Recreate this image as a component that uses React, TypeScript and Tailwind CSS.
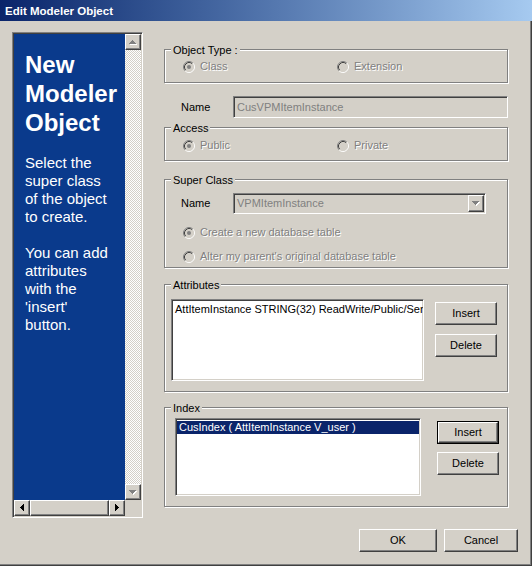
import React from 'react'

const raised = 'bg-[#d4d0c8] border border-t-white border-l-white border-r-[#404040] border-b-[#404040] shadow-[inset_-1px_-1px_0_#808080]'
const sunken = 'border border-t-[#808080] border-l-[#808080] border-r-white border-b-white shadow-[inset_1px_1px_0_#404040,inset_-1px_-1px_0_#d4d0c8]'
const dimText = 'text-[#808080] [text-shadow:1px_1px_0_#fff]'

const UP = 'M3 0h1v1h1v1h1v1h1v1H0V3h1V2h1V1h1z'
const DOWN = 'M0 0h7v1H6v1H5v1H4v1H3V3H2V2H1V1H0z'
const RIGHT = 'M0 0h1v1h1v1h1v1h1v1H3v1H2v1H1v1H0z'
const LEFT = 'M4 0v7H3V6H2V5H1V4H0V3h1V2h1V1h1V0z'

const Arrow = ({ d, w, h, dim }: { d: string; w: number; h: number; dim?: boolean }) => (
  <svg width={w + 1} height={h + 1} viewBox={`0 0 ${w + 1} ${h + 1}`}>
    {dim && <path d={d} fill="#fff" transform="translate(1 1)" />}
    <path d={d} fill={dim ? '#808080' : '#000'} />
  </svg>
)

const Radio = ({ checked }: { checked?: boolean }) => (
  <svg width="12" height="12" viewBox="0 0 12 12" className="shrink-0">
    <circle cx="6" cy="6" r="4" fill="#d4d0c8" />
    <path d="M2.11 9.89A5.5 5.5 0 0 1 9.89 2.11" stroke="#808080" fill="none" />
    <path d="M9.89 2.11A5.5 5.5 0 0 1 2.11 9.89" stroke="#fff" fill="none" />
    <path d="M2.82 9.18A4.5 4.5 0 0 1 9.18 2.82" stroke="#404040" fill="none" />
    <path d="M9.18 2.82A4.5 4.5 0 0 1 2.82 9.18" stroke="#d4d0c8" fill="none" />
    {checked && <circle cx="6" cy="6" r="2" fill="#808080" />}
  </svg>
)

const Option = ({ label, checked }: { label: string; checked?: boolean }) => (
  <div className="flex items-center gap-[5px] h-[13px]">
    <Radio checked={checked} />
    <span className={`${dimText} whitespace-nowrap`}>{label}</span>
  </div>
)

const Group = ({ label, className, children }: { label: string; className: string; children: React.ReactNode }) => (
  <div className={`w-[344px] flex flex-col border border-[#808080] shadow-[inset_1px_1px_0_#fff,1px_1px_0_#fff] ${className}`}>
    <span className="-mt-[6px] ml-[6px] self-start bg-[#d4d0c8] px-[2px] leading-[13px]">{label}</span>
    {children}
  </div>
)

const Btn = ({ label, className }: { label: string; className: string }) => (
  <div className={`${raised} flex items-center justify-center ${className}`}>{label}</div>
)

const ScrollBtn = ({ children }: { children: React.ReactNode }) => (
  <div className={`${raised} w-[16px] h-[16px] shrink-0 flex items-center justify-center`}>{children}</div>
)

const LeftPanel = () => (
  <div className={`ml-[12px] mt-[11px] w-[131px] h-[486px] p-[1px] flex flex-col ${sunken}`}>
    <div className="flex flex-1 min-h-0">
      <div className="flex-1 bg-[#0a3a8c] pl-[11px] pt-[16px] text-white">
        <div className="font-bold text-[24px] leading-[29px]">New<br />Modeler<br />Object</div>
        <div className="mt-[17px] text-[15px] leading-[18px]">
          Select the<br />super class<br />of the object<br />to create.<br /><br />
          You can add<br />attributes<br />with the<br />'insert'<br />button.
        </div>
      </div>
      <div className="w-[16px] flex flex-col">
        <ScrollBtn><Arrow d={UP} w={7} h={4} dim /></ScrollBtn>
        <div className="flex-1 bg-[repeating-conic-gradient(#d4d0c8_0%_25%,#ffffff_0%_50%)] bg-[length:2px_2px]" />
        <ScrollBtn><Arrow d={DOWN} w={7} h={4} dim /></ScrollBtn>
      </div>
    </div>
    <div className="flex h-[16px]">
      <ScrollBtn><Arrow d={LEFT} w={4} h={7} /></ScrollBtn>
      <div className={`${raised} flex-1`} />
      <ScrollBtn><Arrow d={RIGHT} w={4} h={7} /></ScrollBtn>
      <div className="w-[16px] bg-[#d4d0c8]" />
    </div>
  </div>
)

export default function App() {
  return (
    <div className="w-[532px] h-[566px] bg-[#d4d0c8] flex flex-col font-['Liberation_Sans',Arial,sans-serif] text-[11px] leading-[13px] text-black shadow-[inset_-1px_-1px_0_#404040,inset_-2px_-2px_0_#808080] overflow-hidden">
      <div className="h-[21px] shrink-0 flex items-center pl-[5px] pt-[1px] bg-linear-to-r from-[#0a246a] to-[#a6caf0]">
        <span className="text-white font-bold text-[11.5px]">Edit Modeler Object</span>
      </div>
      <div className="flex items-start">
        <LeftPanel />
        <div className="ml-[21px] w-[354px] flex flex-col">
          <Group label="Object Type :" className="mt-[28px] h-[34px]">
            <div className="mt-[3px] flex pl-[18px]">
              <div className="w-[154px]"><Option label="Class" checked /></div>
              <Option label="Extension" />
            </div>
          </Group>

          <div className="mt-[13px] flex items-center pl-[17px] w-[344px]">
            <span className="w-[52px]">Name</span>
            <div className={`w-[275px] h-[22px] bg-[#d4d0c8] flex items-center pl-[3px] ${sunken}`}>
              <span className="text-[#808080]">CusVPMItemInstance</span>
            </div>
          </div>

          <Group label="Access" className="mt-[9px] h-[34px]">
            <div className="mt-[4px] flex pl-[18px]">
              <div className="w-[154px]"><Option label="Public" checked /></div>
              <Option label="Private" />
            </div>
          </Group>

          <Group label="Super Class" className="mt-[18px] h-[89px]">
            <div className="mt-[6px] flex items-center pl-[16px]">
              <span className="w-[52px]">Name</span>
              <div className={`w-[253px] h-[21px] p-[1px] bg-[#d4d0c8] flex ${sunken}`}>
                <span className="flex-1 flex items-center pl-[2px] text-[#808080]">VPMItemInstance</span>
                <div className={`${raised} w-[16px] flex items-center justify-center`}>
                  <Arrow d={DOWN} w={7} h={4} dim />
                </div>
              </div>
            </div>
            <div className="mt-[12px] pl-[18px]"><Option label="Create a new database table" checked /></div>
            <div className="mt-[11px] pl-[18px]"><Option label="Alter my parent's original database table" /></div>
          </Group>

          <Group label="Attributes" className="mt-[16px] h-[108px]">
            <div className="mt-[7px] flex items-start pl-[6px]">
              <div className={`w-[253px] h-[82px] bg-white overflow-hidden pl-[3px] pt-[3px] ${sunken}`}>
                <div className="whitespace-nowrap">AttItemInstance STRING(32) ReadWrite/Public/Sen</div>
              </div>
              <div className="ml-[11px] mt-[3px] flex flex-col gap-[9px]">
                <Btn label="Insert" className="w-[62px] h-[23px]" />
                <Btn label="Delete" className="w-[62px] h-[23px]" />
              </div>
            </div>
          </Group>

          <Group label="Index" className="mt-[15px] h-[100px]">
            <div className="mt-[3px] flex items-start pl-[10px]">
              <div className={`w-[246px] h-[78px] bg-white overflow-hidden p-[1px] pt-[2px] ${sunken}`}>
                <div className="h-[13px] bg-[#0a246a] text-white pl-[2px] whitespace-nowrap">CusIndex ( AttItemInstance V_user )</div>
              </div>
              <div className="ml-[16px] mt-[3px] flex flex-col gap-[8px]">
                <div className="w-[62px] h-[23px] border border-black flex">
                  <Btn label="Insert" className="flex-1" />
                </div>
                <Btn label="Delete" className="w-[62px] h-[23px]" />
              </div>
            </div>
          </Group>

          <div className="mt-[22px] flex justify-end gap-[7px]">
            <Btn label="OK" className="w-[78px] h-[23px]" />
            <Btn label="Cancel" className="w-[74px] h-[23px]" />
          </div>
        </div>
      </div>
    </div>
  )
}
